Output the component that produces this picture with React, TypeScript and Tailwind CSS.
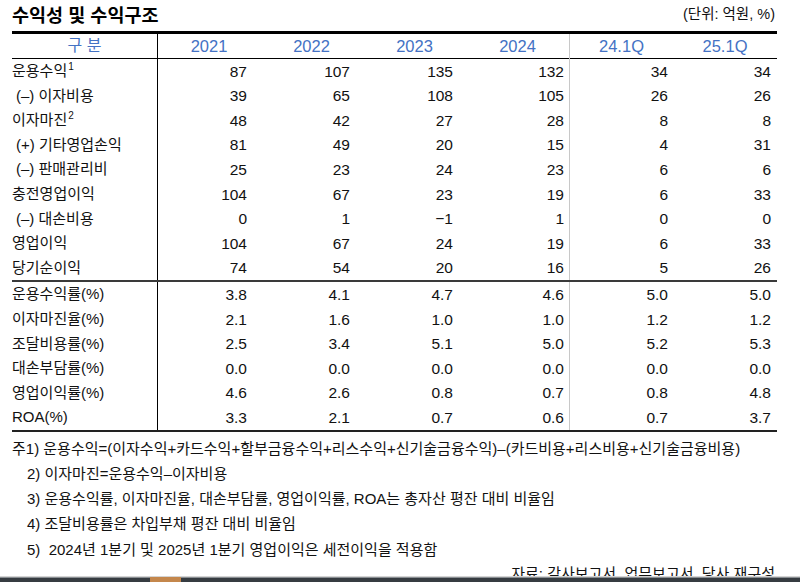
import React from "react";

type Row = { label: string; sup?: string; indent?: boolean; vals: string[] };

const group1: Row[] = [
  { label: "운용수익", sup: "1", vals: ["87", "107", "135", "132", "34", "34"] },
  { label: "(–) 이자비용", indent: true, vals: ["39", "65", "108", "105", "26", "26"] },
  { label: "이자마진", sup: "2", vals: ["48", "42", "27", "28", "8", "8"] },
  { label: "(+) 기타영업손익", indent: true, vals: ["81", "49", "20", "15", "4", "31"] },
  { label: "(–) 판매관리비", indent: true, vals: ["25", "23", "24", "23", "6", "6"] },
  { label: "충전영업이익", vals: ["104", "67", "23", "19", "6", "33"] },
  { label: "(–) 대손비용", indent: true, vals: ["0", "1", "−1", "1", "0", "0"] },
  { label: "영업이익", vals: ["104", "67", "24", "19", "6", "33"] },
  { label: "당기순이익", vals: ["74", "54", "20", "16", "5", "26"] },
];

const group2: Row[] = [
  { label: "운용수익률(%)", vals: ["3.8", "4.1", "4.7", "4.6", "5.0", "5.0"] },
  { label: "이자마진율(%)", vals: ["2.1", "1.6", "1.0", "1.0", "1.2", "1.2"] },
  { label: "조달비용률(%)", vals: ["2.5", "3.4", "5.1", "5.0", "5.2", "5.3"] },
  { label: "대손부담률(%)", vals: ["0.0", "0.0", "0.0", "0.0", "0.0", "0.0"] },
  { label: "영업이익률(%)", vals: ["4.6", "2.6", "0.8", "0.7", "0.8", "4.8"] },
  { label: "ROA(%)", vals: ["3.3", "2.1", "0.7", "0.6", "0.7", "3.7"] },
];

const grid = "grid grid-cols-[145px_103px_103px_103px_104px_103px_104px]";

const valCls = [
  "pr-[13px] border-l border-black",
  "pr-[13px]",
  "pr-[13px]",
  "pr-[5px] border-r border-[#c8c8c8]",
  "pr-[5px]",
  "pr-[6px]",
];

function DataRow({ r }: { r: Row }) {
  return (
    <div className={`${grid} h-[24.6px] items-center`}>
      <div className={`text-[15px] text-[#111] whitespace-nowrap ${r.indent ? "pl-[4px]" : ""}`}>
        {r.label}
        {r.sup && (
          <span className="text-[10px] relative top-[-6px] ml-[1px] align-baseline">{r.sup}</span>
        )}
      </div>
      {r.vals.map((v, i) => (
        <div
          key={i}
          className={`h-full flex items-center justify-end text-[15.5px] text-[#111] ${valCls[i]}`}
        >
          {v}
        </div>
      ))}
    </div>
  );
}

export default function App() {
  const years = ["2021", "2022", "2023", "2024", "24.1Q", "25.1Q"];
  const headCls = [
    "border-l border-black",
    "",
    "",
    "border-r border-[#c8c8c8]",
    "",
    "",
  ];
  return (
    <div
      className="relative w-[800px] h-[582px] overflow-hidden bg-white text-[#111]"
      style={{ fontFamily: '"Liberation Sans", "Noto Sans CJK KR", sans-serif' }}
    >
      <div className="pl-[12px] pr-[23px]">
        <div className="h-[31px] flex items-end justify-between pb-[4px]">
          <div className="text-[18.5px] font-bold leading-[22px] text-black">수익성 및 수익구조</div>
          <div className="text-[14.5px] leading-[18px] mr-[2px] mb-[4px]">(단위: 억원, %)</div>
        </div>
        <div className="border-t-[3px] border-black">
          <div className={`${grid} h-[25px] border-b border-black items-stretch`}>
            <div className="flex items-center justify-center text-[16px] text-[#4472c4]">구 분</div>
            {years.map((y, i) => (
              <div
                key={y}
                className={`flex items-center justify-center text-[16.5px] text-[#4472c4] ${headCls[i]}`}
              >
                {y}
              </div>
            ))}
          </div>
          {group1.map((r) => (
            <DataRow key={r.label} r={r} />
          ))}
          <div className="h-[2px] bg-[#3a3a3a]" />
          {group2.map((r) => (
            <DataRow key={r.label} r={r} />
          ))}
          <div className="h-[2px] bg-[#222]" />
        </div>
        <div className="mt-[4px] text-[15px] text-[#111]">
          <div className="h-[25px] leading-[25px] whitespace-nowrap">
            주1) 운용수익=(이자수익+카드수익+할부금융수익+리스수익+신기술금융수익)–(카드비용+리스비용+신기술금융비용)
          </div>
          <div className="h-[25px] leading-[25px] pl-[15px]">2) 이자마진=운용수익–이자비용</div>
          <div className="h-[25px] leading-[25px] pl-[15px]">
            3) 운용수익률, 이자마진율, 대손부담률, 영업이익률, ROA는 총자산 평잔 대비 비율임
          </div>
          <div className="h-[25px] leading-[25px] pl-[15px]">4) 조달비용률은 차입부채 평잔 대비 비율임</div>
          <div className="h-[27px] leading-[27px] pl-[15px] whitespace-pre">5)  2024년 1분기 및 2025년 1분기 영업이익은 세전이익을 적용함</div>
          <div className="h-[22px] leading-[22px] text-right mr-[2px]">자료: 감사보고서, 업무보고서, 당사 재구성</div>
        </div>
      </div>
      <div className="absolute left-0 right-0 bottom-0 flex flex-col">
        <div className="h-[1px] bg-[#d4d4d4]" />
        <div className="h-[1px] bg-[#8a8f93]" />
        <div className="relative h-[4px] bg-[#363c41]">
          <div className="absolute left-[150px] top-[-1px] bottom-0 w-[31px] bg-[#c4874c]" />
        </div>
      </div>
    </div>
  );
}
